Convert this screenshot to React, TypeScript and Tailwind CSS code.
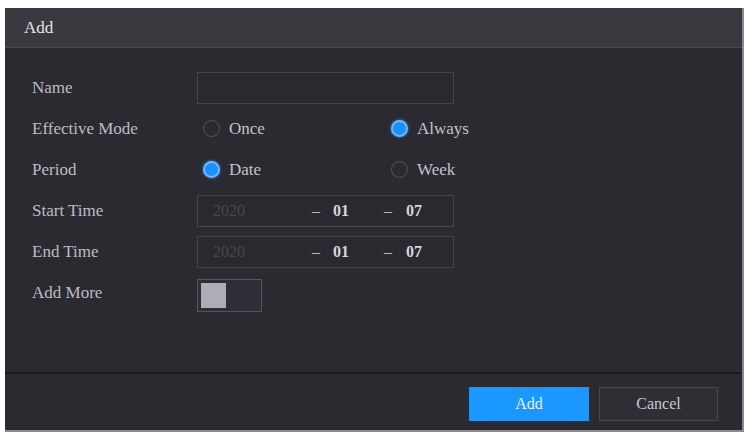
import { ReactNode } from 'react'

interface RowProps {
  label: string
  children: ReactNode
}

function Row({ label, children }: RowProps) {
  return (
    <div className="flex items-center h-[41px]">
      <div className="w-[192px] pl-[27px] text-[17px] text-[#bdbcc2]">{label}</div>
      <div className="flex items-center flex-1">{children}</div>
    </div>
  )
}

function Radio({ label, checked, width }: { label: string; checked?: boolean; width?: string }) {
  return (
    <div className={`flex items-center pl-[6px] ${width ?? ''}`}>
      {checked ? (
        <span className="w-[17px] h-[17px] rounded-full border-2 border-[#6fb6ff] bg-[#1e8fff] shadow-[0_0_3px_#3a8fe0]" />
      ) : (
        <span className="w-[17px] h-[17px] rounded-full border border-[#56555c]" />
      )}
      <span className="ml-[9px] text-[17px] text-[#c4c3c8]">{label}</span>
    </div>
  )
}

function DateField({ year }: { year: string }) {
  return (
    <div className="flex items-center w-[257px] h-[32px] border border-[#45444b] bg-[#2a2930] text-[16px]">
      <span className="ml-[15px] w-[80px] text-[#47464d]">{year}</span>
      <span className="ml-[19px] text-[#b9b8be]">–</span>
      <span className="ml-[13px] font-bold text-[#d6d5da]">01</span>
      <span className="ml-[35px] text-[#b9b8be]">–</span>
      <span className="ml-[14px] font-bold text-[#d6d5da]">07</span>
    </div>
  )
}

export default function App() {
  return (
    <div
      className="w-[748px] h-[434px] bg-white pt-[8px] pl-[5px]"
      style={{ fontFamily: '"Liberation Serif", "Times New Roman", serif' }}
    >
      <div className="w-[739px] h-[424px] flex flex-col bg-[#2b2a31] border-r-2 border-b-2 border-[#8a898f]">
        {/* title bar */}
        <div className="h-[40px] flex items-center pl-[19px] bg-[#3a393f] border-b border-[#4a494f] text-[17px] text-[#e4e3e8]">
          Add
        </div>

        {/* form */}
        <div className="flex-1 pt-[19px]">
          <Row label="Name">
            <div className="w-[257px] h-[32px] border border-[#45444b] bg-[#2a2930]" />
          </Row>
          <Row label="Effective Mode">
            <Radio label="Once" width="w-[188px]" />
            <Radio label="Always" checked />
          </Row>
          <Row label="Period">
            <Radio label="Date" checked width="w-[188px]" />
            <Radio label="Week" />
          </Row>
          <Row label="Start Time">
            <DateField year="2020" />
          </Row>
          <Row label="End Time">
            <DateField year="2020" />
          </Row>
          <Row label="Add More">
            <div className="w-[65px] h-[33px] mt-[6px] border border-[#56555c] bg-[#2f2e36] p-[3px]">
              <div className="w-[25px] h-full bg-[#aeadb5]" />
            </div>
          </Row>
        </div>

        {/* footer */}
        <div className="h-[58px] border-t-2 border-[#1c1b20] flex items-start justify-end gap-[10px] pt-[13px] pr-[24px]">
          <button className="w-[120px] h-[34px] bg-[#1b98ff] text-[16px] text-[#e8f2ff]">Add</button>
          <button className="w-[119px] h-[34px] bg-[#2f2e35] border border-[#4a4950] text-[16px] text-[#c9c8cd]">
            Cancel
          </button>
        </div>
      </div>
    </div>
  )
}
